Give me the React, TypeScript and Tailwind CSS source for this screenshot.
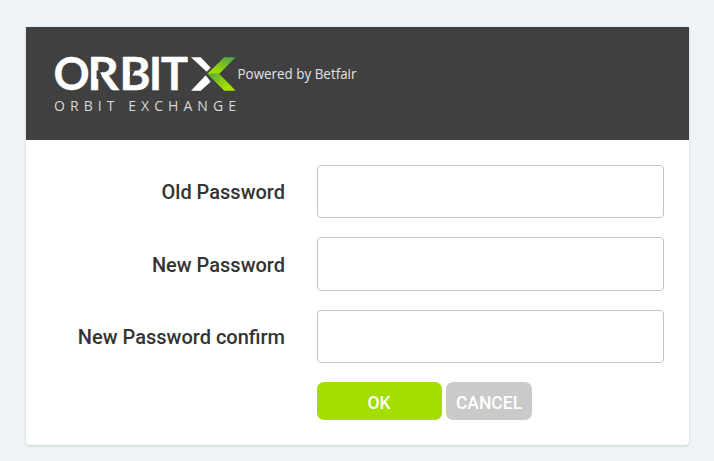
import React from "react";

function Logo() {
  return (
    <svg width="310" height="90" viewBox="0 -14 310 90" role="img" aria-label="OrbitX">
      <defs>
        <linearGradient id="upper" x1="0" y1="1" x2="1" y2="0">
          <stop offset="0.2" stopColor="#a4dd00" />
          <stop offset="0.9" stopColor="#4fa545" />
        </linearGradient>
        <linearGradient id="lower" x1="0" y1="0" x2="1" y2="1">
          <stop offset="0.1" stopColor="#5bad3c" />
          <stop offset="0.75" stopColor="#a8e000" />
        </linearGradient>
      </defs>
      <g fill="#fff" stroke="#fff" strokeWidth="0.3" fontFamily="Lato, sans-serif" fontWeight="700" fontSize="45.5">
        <text x="-0.4" y="38.3" textLength="36.2" lengthAdjust="spacingAndGlyphs">O</text>
        <text x="33.2" y="38.3" textLength="31.8" lengthAdjust="spacingAndGlyphs">R</text>
        <text x="65.3" y="38.3" textLength="31.5" lengthAdjust="spacingAndGlyphs">B</text>
        <text x="94.8" y="38.3">I</text>
        <text x="106.8" y="38.3" textLength="27.4" lengthAdjust="spacingAndGlyphs">T</text>
      </g>
      <path d="M42.6 18.5h2.8l3.8 8.5h-6.6z M76 18.5h5l-3 5.5h-2z" fill="#404040" />
      <path d="M137 5.3h9.7l10 10.5-4 4z M137 38.7l14.7-15.4 5 6.4-10 9z" fill="#fff" />
      <path d="M170.3 5.3h11.4L165 22h-12z" fill="url(#upper)" />
      <path d="M153 21.5h12l16.7 17.2h-11.4z" fill="url(#lower)" />
      <text x="0" y="58.5" fill="#d8d8d8" fontFamily="Open Sans, sans-serif" fontSize="14" textLength="182">
        ORBIT EXCHANGE
      </text>
      <text x="183.5" y="26.5" fill="#e4e4e4" fontFamily="Open Sans, sans-serif" fontSize="14" textLength="119" lengthAdjust="spacingAndGlyphs">
        Powered by Betfair
      </text>
    </svg>
  );
}

function Field({ label }: { label: string }) {
  return (
    <label className="group flex items-stretch">
      <span className="flex w-[259px] items-center justify-end text-[20px] font-medium text-[#333] group-even:pt-[2px]">{label}</span>
      <input type="password" className="ml-8 w-[347px] rounded-[4px] border border-[#c4c4c4] bg-white outline-none" />
    </label>
  );
}

export default function App() {
  return (
    <main className="h-[461px] w-[714px] bg-[#eff4f8] pt-[27px] pl-[26px] font-[Roboto,sans-serif]">
      <section className="h-[418px] w-[663px] overflow-hidden rounded-b-[4px] bg-white shadow-[0_1px_3px_rgba(0,0,0,0.16)]">
        <header className="h-[113px] bg-[#404040] pt-[11px] pl-[28px]">
          <Logo />
        </header>
        <form className="pt-[25px]">
          <div className="grid grid-rows-[53px_54px_53px] gap-[19px]">
            <Field label="Old Password" />
            <Field label="New Password" />
            <Field label="New Password confirm" />
          </div>
          <div className="mt-[19px] ml-[291px] flex gap-1 text-[17.5px] font-medium text-white">
            <button type="button" className="h-[38px] w-[125px] rounded-[7px] bg-[#a4dd00] pt-[4px] pr-px">OK</button>
            <button type="button" className="h-[38px] w-[86px] rounded-[7px] bg-[#cacaca] pt-[4px]">CANCEL</button>
          </div>
        </form>
      </section>
    </main>
  );
}
